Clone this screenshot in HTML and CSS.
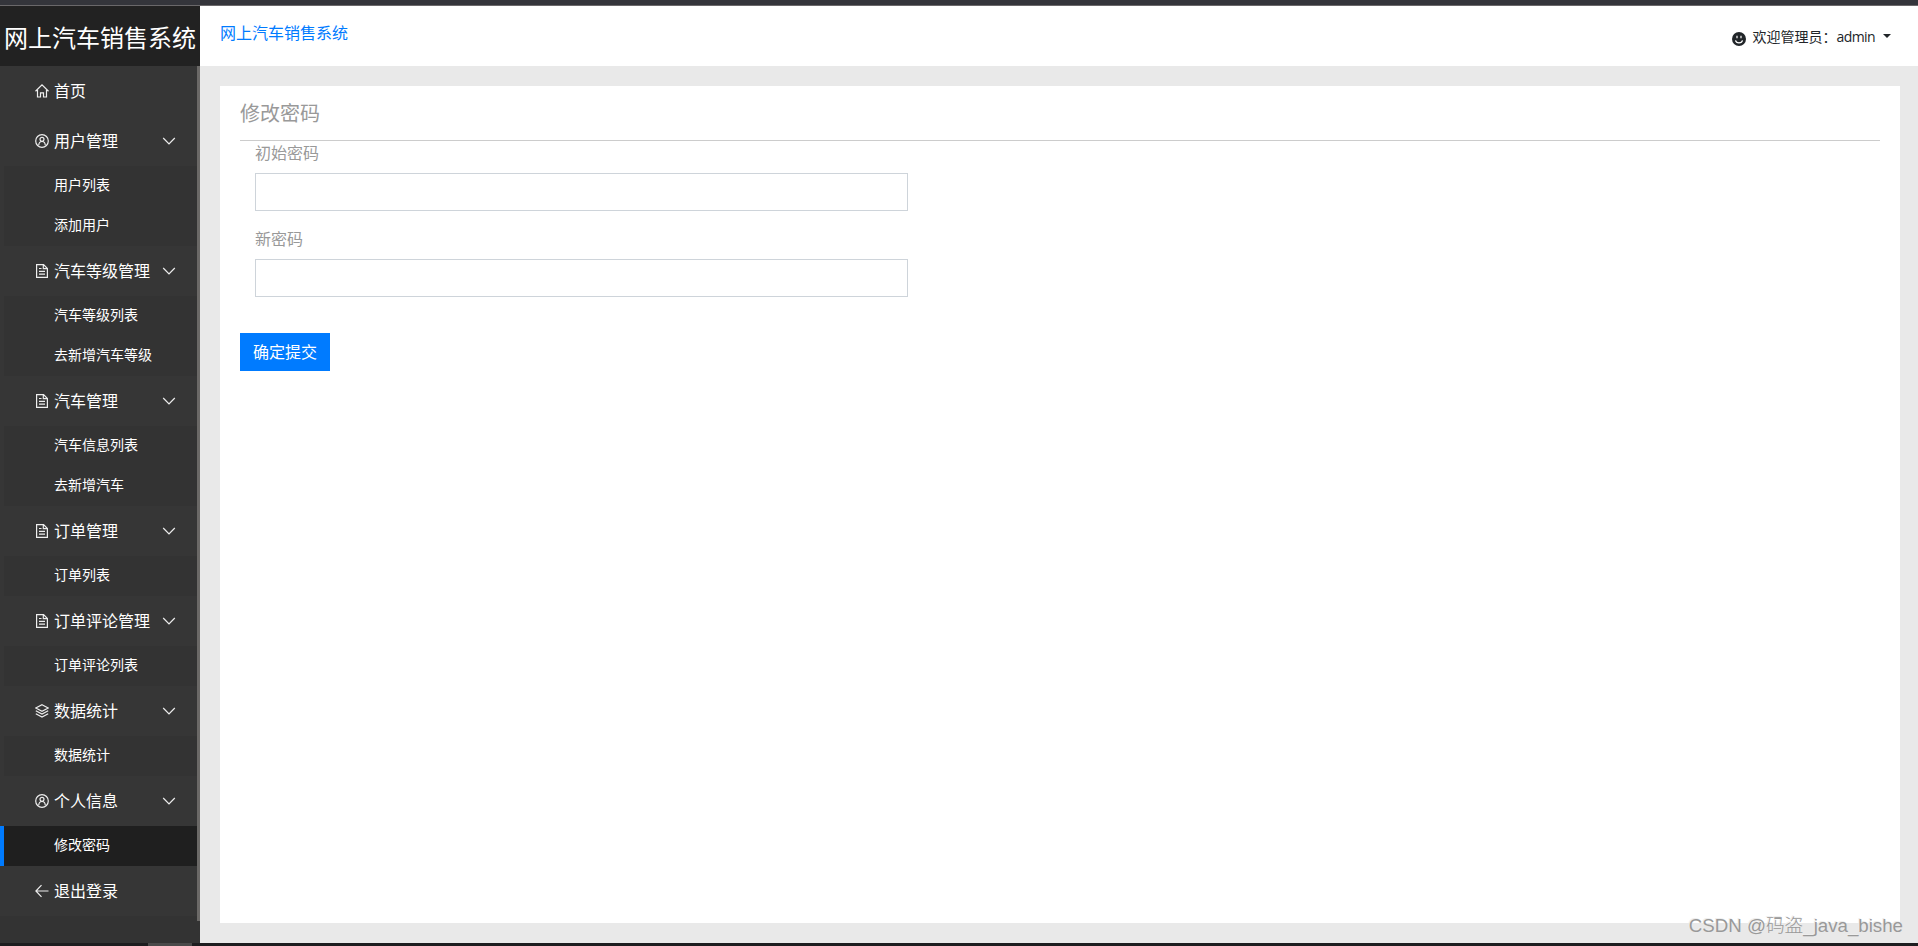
FILE: index.html
```
<!DOCTYPE html>
<html lang="zh-CN">
<head>
  <meta charset="UTF-8" />
  <meta name="viewport" content="width=device-width, initial-scale=1.0" />
  <title>网上汽车销售系统</title>
  <link rel="stylesheet" href="styles.css">
</head>
<body>
  <svg class="sprite" aria-hidden="true">
    <symbol id="icon-home" viewBox="0 0 14 14"><path d="M.5 7.2 7 .9l6.500 6.300M2.500 6v7h3V8.800h3V13h3V6" /></symbol>
    <symbol id="icon-user" viewBox="0 0 14 14"><circle cx="7" cy="7" r="6.300" /><circle cx="7" cy="5.300" r="2" /><path d="M3.700 11.300C3.900 8.700 5.200 7.500 7 7.500s3.100 1.200 3.300 3.800" /></symbol>
    <symbol id="icon-file" viewBox="0 0 14 14"><path d="M1.600.700h7l3.800 3.800v8.800H1.600zM8.300.700v4h4M4 4.500h2.500M4 7.300h6M4 10.200h6" /></symbol>
    <symbol id="icon-layers" viewBox="0 0 14 14"><path d="M7 .700 13.200 4 7 7.300.800 4zM.800 6.800 7 10.100l6.200-3.300M.800 9.800 7 13.100l6.200-3.300" /></symbol>
    <symbol id="icon-back" viewBox="0 0 14 14"><path d="M13.500 7H1M6.500 1.200.900 7l5.600 5.800" /></symbol>
    <symbol id="icon-down" viewBox="0 0 14 14"><path d="m1.200 4 5.800 6 5.800-6" /></symbol>
  </svg>

  <div class="window-top"></div>
  <div class="layout">
    <aside class="sidebar">
      <h1 class="logo">网上汽车销售系统</h1>
      <div class="sidebar-body">
        <ul class="menu">
          <li><a class="menu-item"><svg class="icon"><use href="#icon-home" /></svg><span>首页</span></a></li>
          <li>
            <a class="menu-item"><svg class="icon"><use href="#icon-user" /></svg><span>用户管理</span><svg class="arrow"><use href="#icon-down" /></svg></a>
            <ul class="submenu">
              <li><a>用户列表</a></li>
              <li><a>添加用户</a></li>
            </ul>
          </li>
          <li>
            <a class="menu-item"><svg class="icon"><use href="#icon-file" /></svg><span>汽车等级管理</span><svg class="arrow"><use href="#icon-down" /></svg></a>
            <ul class="submenu">
              <li><a>汽车等级列表</a></li>
              <li><a>去新增汽车等级</a></li>
            </ul>
          </li>
          <li>
            <a class="menu-item"><svg class="icon"><use href="#icon-file" /></svg><span>汽车管理</span><svg class="arrow"><use href="#icon-down" /></svg></a>
            <ul class="submenu">
              <li><a>汽车信息列表</a></li>
              <li><a>去新增汽车</a></li>
            </ul>
          </li>
          <li>
            <a class="menu-item"><svg class="icon"><use href="#icon-file" /></svg><span>订单管理</span><svg class="arrow"><use href="#icon-down" /></svg></a>
            <ul class="submenu">
              <li><a>订单列表</a></li>
            </ul>
          </li>
          <li>
            <a class="menu-item"><svg class="icon"><use href="#icon-file" /></svg><span>订单评论管理</span><svg class="arrow"><use href="#icon-down" /></svg></a>
            <ul class="submenu">
              <li><a>订单评论列表</a></li>
            </ul>
          </li>
          <li>
            <a class="menu-item"><svg class="icon"><use href="#icon-layers" /></svg><span>数据统计</span><svg class="arrow"><use href="#icon-down" /></svg></a>
            <ul class="submenu">
              <li><a>数据统计</a></li>
            </ul>
          </li>
          <li>
            <a class="menu-item"><svg class="icon"><use href="#icon-user" /></svg><span>个人信息</span><svg class="arrow"><use href="#icon-down" /></svg></a>
            <ul class="submenu">
              <li class="active"><a>修改密码</a></li>
            </ul>
          </li>
          <li><a class="menu-item"><svg class="icon"><use href="#icon-back" /></svg><span>退出登录</span></a></li>
        </ul>
        <div class="scrollbar"></div>
      </div>
    </aside>

    <div class="main">
      <header class="topbar">
        <a class="brand">网上汽车销售系统</a>
        <div class="user">
          <svg class="face" viewBox="0 0 14 14"><circle cx="7" cy="7" r="7" /><path d="M5 3.800v2.400M9 3.800v2.400M3.500 8.300c.7 3.300 6.300 3.300 7 0" /></svg>
          <span class="welcome">欢迎管理员：</span><span class="name">admin</span>
          <span class="caret"></span>
        </div>
      </header>
      <div class="content">
        <form class="card">
          <h2>修改密码</h2>
          <div class="form-group">
            <label for="oldPwd">初始密码</label>
            <input type="password" id="oldPwd">
          </div>
          <div class="form-group">
            <label for="newPwd">新密码</label>
            <input type="password" id="newPwd">
          </div>
          <button type="button">确定提交</button>
        </form>
      </div>
    </div>
  </div>
  <div class="window-bottom"><span></span></div>
  <div class="watermark">CSDN @码盗_java_bishe</div>
</body>
</html>
```
FILE: styles.css
```
* {
  box-sizing: border-box;
}
html, body {
  height: 100%;
  margin: 0;
  overflow: hidden;
}
body {
  display: flex;
  flex-direction: column;
  font-family: "Noto Sans", "Noto Sans CJK SC", sans-serif;
  font-size: 16px;
  font-weight: 400;
  color: #212529;
}
ul {
  list-style: none;
  margin: 0;
  padding: 0;
}
.sprite {
  position: absolute;
  width: 0;
  height: 0;
}
.window-top {
  flex: 0 0 6px;
  background: #34353b;
  border-bottom: 1px solid #6a686a;
}
.window-bottom {
  flex: 0 0 3px;
  padding-left: 148px;
  background: #1d1d1f;
}
.window-bottom span {
  display: block;
  width: 44px;
  height: 3px;
  background: #4a4a4a;
}
.layout {
  flex: 1;
  min-height: 0;
  display: flex;
}

/* sidebar */
.sidebar {
  flex: 0 0 200px;
  display: flex;
  flex-direction: column;
  background: #333;
  color: #fff;
}
.logo {
  margin: 0;
  height: 60px;
  line-height: 63px;
  padding-left: 4px;
  background: #222;
  font-size: 24px;
  font-weight: 400;
  white-space: nowrap;
}
.sidebar-body {
  display: flex;
  align-items: flex-start;
}
.menu {
  width: 197px;
  background: #363636;
}
.scrollbar {
  width: 3px;
  height: 855px;
  background: #6b6967;
}
.menu-item {
  display: flex;
  align-items: center;
  height: 50px;
  padding: 0 21px 0 35px;
}
.menu-item span {
  line-height: 24px;
}
.menu-item .icon {
  width: 14px;
  height: 14px;
  margin-right: 5px;
}
.menu-item .arrow {
  width: 14px;
  height: 14px;
  margin-left: auto;
}
.icon, .arrow {
  flex: none;
  fill: none;
  stroke: #eee;
  stroke-width: 1.2;
}
.submenu li {
  height: 40px;
  line-height: 38px;
  padding-left: 50px;
  border-left: 4px solid #363636;
  background: #333;
  font-size: 14px;
}
.submenu .active {
  border-left-color: #007bff;
  background: #1f1f1f;
}

/* right side */
.main {
  flex: 1;
  display: flex;
  flex-direction: column;
}
.topbar {
  flex: 0 0 60px;
  display: flex;
  justify-content: space-between;
  align-items: flex-start;
  padding: 0 27px 0 20px;
  background: #fff;
}
.brand {
  line-height: 54px;
  color: #007bff;
}
.user {
  display: flex;
  align-items: center;
  height: 60px;
  font-size: 14px;
}
.name {
  font-family: "Open Sans", "Noto Sans", sans-serif;
  letter-spacing: -0.6px;
}
.face {
  width: 14px;
  height: 14px;
  margin: 5px 7px 0 0;
  fill: #212529;
}
.face path {
  fill: none;
  stroke: #fff;
  stroke-width: 1.2;
}
.caret {
  margin: -1px 0 0 8px;
  border: 4px solid transparent;
  border-top-color: #212529;
  border-bottom: 0;
}
.content {
  flex: 1;
  padding: 20px 18px 20px 20px;
  background: #e9e9e9;
}
.card {
  height: 100%;
  padding: 0 20px;
  background: #fff;
  color: #999;
}
.card h2 {
  margin: 0;
  height: 55px;
  line-height: 56px;
  border-bottom: 1px solid #ccc;
  font-size: 20px;
  font-weight: 400;
}
.form-group {
  height: 86px;
  padding-left: 15px;
}
.form-group label {
  display: block;
  height: 32px;
  line-height: 25px;
}
.form-group input {
  display: block;
  width: 653px;
  height: 38px;
  border: 1px solid #ced4da;
  border-radius: 0;
}
.card button {
  display: block;
  width: 90px;
  height: 38px;
  margin-top: 20px;
  padding: 0 0 2px;
  border: 0;
  background: #007bff;
  color: #fff;
  font: inherit;
}
.watermark {
  position: absolute;
  right: 15px;
  bottom: 6px;
  font-family: "Liberation Sans", "Noto Sans CJK SC", sans-serif;
  font-size: 18.7px;
  line-height: 28px;
  font-weight: 300;
  color: #999;
  text-shadow: -1px -1px 0 #eee;
}
```
